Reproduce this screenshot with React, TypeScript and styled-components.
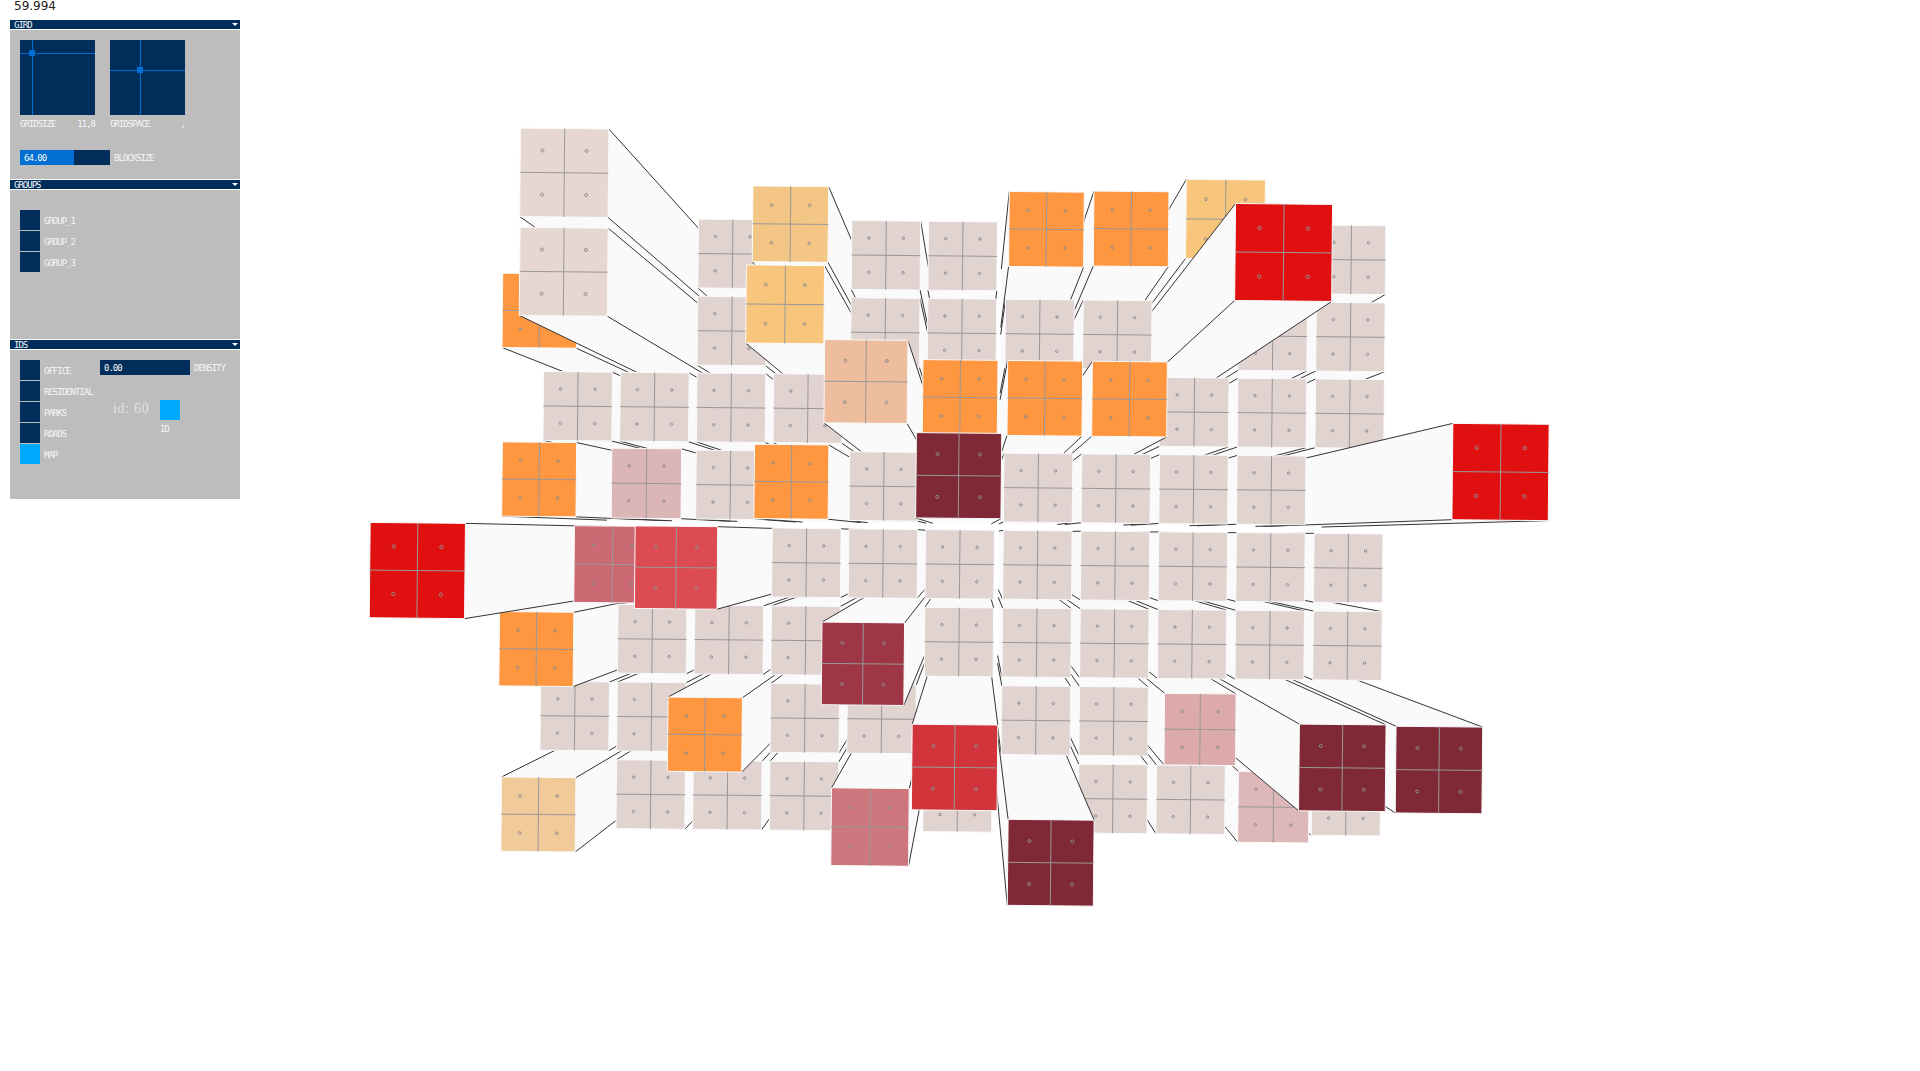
import React from 'react';
import styled, { createGlobalStyle } from 'styled-components';

const GlobalStyle = createGlobalStyle`
    html, body {
        margin: 0;
        padding: 0;
        background: #ffffff;
    }
`;

const NAVY = '#002d5a';
const BLUE = '#006ed2';
const CYAN = '#00aaff';

const Page = styled.div`
    display: flex;
    width: 1920px;
    height: 1071px;
    overflow: hidden;
    background: #ffffff;
`;
const Sidebar = styled.aside`
    flex: none;
    width: 240px;
    padding-left: 10px;
    box-sizing: border-box;
`;
const Fps = styled.div`
    height: 20px;
    padding-left: 4px;
    font: 12px/12px 'DejaVu Sans', sans-serif;
    color: #222;
`;
const Group = styled.section`
    width: 230px;
    margin-bottom: 1px;
`;
const TitleBar = styled.header`
    display: flex;
    justify-content: space-between;
    align-items: center;
    height: 9px;
    margin-bottom: 1px;
    padding: 0 2px 0 4px;
    background: ${NAVY};
`;
const Arrow = styled.span`
    width: 0;
    height: 0;
    border-left: 3px solid transparent;
    border-right: 3px solid transparent;
    border-top: 3px solid #ffffff;
`;
const Label = styled.span`
    font: 9px/10px 'DejaVu Sans Mono', monospace;
    letter-spacing: -1px;
    color: #f6f6f6;
    white-space: nowrap;
`;
const Body = styled.div`
    height: 149px;
    box-sizing: border-box;
    padding: ${(p: { $top: number }) => p.$top}px 0 0 10px;
    background: #bdbdbd;
`;
const PadRow = styled.div`
    display: flex;
    gap: 15px;
`;
const PadColumn = styled.div`
    width: 75px;
`;
const Pad = styled.div`
    width: 75px;
    height: 75px;
    display: grid;
    background: ${NAVY};
`;
const PadCaption = styled.div`
    display: flex;
    justify-content: space-between;
    margin-top: 4px;
`;
const Slider = styled.div`
    display: flex;
    align-items: center;
    gap: 4px;
    margin-top: ${(p: { $top?: number }) => p.$top ?? 0}px;
`;
const SliderTrack = styled.div`
    width: 90px;
    height: 15px;
    display: flex;
    background: ${NAVY};
`;
const SliderFill = styled.div`
    display: flex;
    align-items: center;
    height: 100%;
    padding-left: 4px;
    box-sizing: border-box;
    background: ${(p: { $on: boolean }) => (p.$on ? BLUE : 'transparent')};
`;
const ToggleList = styled.div`
    display: flex;
    flex-direction: column;
    gap: 1px;
`;
const ToggleRow = styled.div`
    display: flex;
    align-items: center;
    gap: 4px;
    height: 20px;
    & > span {
        padding-top: 2px;
    }
`;
const Toggle = styled.div`
    flex: none;
    width: 20px;
    height: 20px;
    background: ${(p: { $on?: boolean }) => (p.$on ? CYAN : NAVY)};
`;
const IdsLayout = styled.div`
    display: flex;
    gap: 0;
`;
const IdsColumn = styled.div`
    width: 80px;
`;
const IdsRight = styled.div`
    display: flex;
    flex-direction: column;
`;
const IdRow = styled.div`
    display: flex;
    gap: 13px;
    margin-top: 25px;
    padding-left: 13px;
`;
const IdValue = styled.div`
    width: 34px;
    padding-top: 2px;
    font: 14px/14px 'Liberation Serif', serif;
    letter-spacing: 0.7px;
    color: #e2e2e2;
    white-space: nowrap;
`;
const IdToggle = styled.div`
    display: flex;
    flex-direction: column;
    gap: 4px;
`;
const Scene = styled.svg`
    flex: 1;
    display: block;
    height: 1071px;
`;
const SideFace = styled.polygon`
    fill: #fafafa;
`;
const EdgeLine = styled.line`
    stroke: #333;
    stroke-width: 1;
`;
const TopFace = styled.polygon`
    stroke: #fafafa;
    stroke-width: 1;
`;
const GridLine = styled.line`
    stroke: #999;
    stroke-width: 1;
`;
const Dot = styled.circle`
    fill: none;
    stroke: #8e8e8e;
    stroke-width: 1;
`;

type Point = [number, number];

const CENTER_X = 960;
const VP_X = 973;
const VP_Y = 535;
const STEP = 77.7;
const SIZE = 68.8;
const BACK = 0.85;
const TILT = (0.55 * Math.PI) / 180;
const ROW_NUDGE = [2.5, 2, 1, 0.5, 0, 0, 0, 0];
const TO_FULL = 1.2245;

const BASE = '#e0d3d0';
const ORANGE = '#ff9640';
const AMBER = '#f8c57c';
const RED = '#e01010';
const DARK = '#7f2836';

// col, row, height scale, colour, then a small shift of the top face
const RAISED: [number, number, number, string, number, number][] = [
    [1, 0, 1.285, '#e6d7d1', -1, 0],
    [1, 1, 1.28, '#e6d7d1', -2, -1],
    [0, 1, 1.08, ORANGE, -6, -2],
    [3, 0, 1.1, '#f4c685', -2, -2],
    [3, 1, 1.135, AMBER, -1, 0],
    [4, 2, 1.21, '#eebd9d', 0, -1],
    [5, 2, 1.09, ORANGE, 0, -1],
    [6, 2, 1.09, ORANGE, 0, -1],
    [7, 2, 1.09, ORANGE, 0, -1],
    [6, 0, 1.09, ORANGE, 0, -2],
    [7, 0, 1.09, ORANGE, 0, -3],
    [8, 0, 1.15, AMBER, -3, 2],
    [8, 1, 1.41, RED, -2, -1],
    [5, 3, 1.24, DARK, 1, 0],
    [0, 3, 1.08, ORANGE, -5, 0],
    [1, 3, 1.015, '#dcb6b6', -2, 0],
    [3, 3, 1.08, ORANGE, -2, 0],
    [10, 3, 1.4, RED, 1, -1],
    [0, 4, 1.385, RED, -5, 0],
    [1, 4, 1.115, '#cb6a73', -3, 0],
    [2, 4, 1.2, '#dc4a52', -4, 0],
    [0, 5, 1.08, ORANGE, -6, 2],
    [4, 5, 1.2, '#9e3645', -1, 1],
    [2, 6, 1.08, ORANGE, -3, 2],
    [5, 6, 1.245, '#d1343b', 0, 2],
    [8, 6, 1.04, '#dcaaaa', 0, 0],
    [9, 6, 1.26, DARK, -3, -3],
    [10, 6, 1.26, DARK, -4, -2],
    [0, 7, 1.08, '#f1ca99', -3, 0],
    [4, 7, 1.13, '#ce767d', 1, -3],
    [6, 7, 1.25, DARK, 0, -1],
    [9, 7, 1.03, '#deb8b8', -3, -1],
];

const project = (x: number, y: number, scale: number): Point => {
    const rx = x * Math.cos(TILT) - y * Math.sin(TILT);
    const ry = x * Math.sin(TILT) + y * Math.cos(TILT);
    return [VP_X + (CENTER_X + rx - VP_X) * scale, VP_Y + ry * scale];
};

const toPoints = (list: Point[]) => list.map((p) => p.join(',')).join(' ');

type BlockData = {
    col: number;
    row: number;
    scale: number;
    color: string;
    cx: number;
    cy: number;
    shiftX: number;
    shiftY: number;
};

const buildBlocks = () => {
    const blocks: BlockData[] = [];
    for (let row = 0; row < 8; row++) {
        for (let col = 0; col < 11; col++) {
            const raised = RAISED.find((r) => r[0] === col && r[1] === row);
            blocks.push({
                col,
                row,
                scale: raised ? raised[2] : 1,
                color: raised ? raised[3] : BASE,
                cx: (col - 5) * STEP + (col < 5 ? 5 - col : 0),
                cy: (row - 3.5) * STEP - 9.5 + ROW_NUDGE[row],
                shiftX: raised ? raised[4] * TO_FULL : 0,
                shiftY: raised ? raised[5] * TO_FULL : 0,
            });
        }
    }
    // outer blocks first, the ones near the middle cover their sides
    return blocks.sort((a, b) => Math.hypot(b.cx, b.cy) - Math.hypot(a.cx, a.cy));
};

const Block = ({ block }: { block: BlockData }) => {
    const { cx, cy, scale, color, shiftX, shiftY } = block;
    const h = SIZE / 2;
    const top = (x: number, y: number): Point => {
        const p = project(x, y, scale);
        return [p[0] + shiftX, p[1] + shiftY];
    };
    const corners: Point[] = [
        [cx - h, cy - h],
        [cx + h, cy - h],
        [cx + h, cy + h],
        [cx - h, cy + h],
    ];
    const front = corners.map((c) => top(c[0], c[1]));
    const back = corners.map((c) => project(c[0], c[1], BACK));
    // faces in corner order: top, right, bottom, left; only those turned to the camera are drawn
    const offsetX = CENTER_X - VP_X;
    const shown = [cy - h > 0, cx + h + offsetX < 0, cy + h < 0, cx - h + offsetX > 0];
    const lineA = [top(cx, cy - h), top(cx, cy + h)];
    const lineB = [top(cx - h, cy), top(cx + h, cy)];
    const dots = [
        top(cx - h / 2, cy - h / 2),
        top(cx + h / 2, cy - h / 2),
        top(cx - h / 2, cy + h / 2),
        top(cx + h / 2, cy + h / 2),
    ];
    return (
        <g>
            {front.map((p, i) => {
                if (!shown[i]) return null;
                const j = (i + 1) % 4;
                return <SideFace key={i} points={toPoints([p, front[j], back[j], back[i]])} />;
            })}
            {front.map((p, i) =>
                shown[i] || shown[(i + 3) % 4] ? (
                    <EdgeLine key={i} x1={p[0]} y1={p[1]} x2={back[i][0]} y2={back[i][1]} />
                ) : null
            )}
            <TopFace points={toPoints(front)} fill={color} />
            <GridLine x1={lineA[0][0]} y1={lineA[0][1]} x2={lineA[1][0]} y2={lineA[1][1]} />
            <GridLine x1={lineB[0][0]} y1={lineB[0][1]} x2={lineB[1][0]} y2={lineB[1][1]} />
            {dots.map((d, i) => (
                <Dot key={i} cx={d[0]} cy={d[1]} r={1.2 * scale} />
            ))}
        </g>
    );
};

const PadGraphic = ({ x, y }: { x: number; y: number }) => (
    <svg width="75" height="75" viewBox="0 0 75 75">
        <rect x={x} y="0" width="1" height="75" fill={BLUE} />
        <rect x="0" y={y} width="75" height="1" fill={BLUE} />
        <rect x={x - 3} y={y - 3} width="6" height="6" fill={BLUE} />
    </svg>
);

const App = () => {
    const blocks = buildBlocks();
    return (
        <Page>
            <GlobalStyle />
            <Sidebar>
                <Fps>59.994</Fps>
                <Group>
                    <TitleBar>
                        <Label>GIRD</Label>
                        <Arrow />
                    </TitleBar>
                    <Body $top={10}>
                        <PadRow>
                            <PadColumn>
                                <Pad>
                                    <PadGraphic x={12} y={13} />
                                </Pad>
                                <PadCaption>
                                    <Label>GRIDSIZE</Label>
                                    <Label>11,8</Label>
                                </PadCaption>
                            </PadColumn>
                            <PadColumn>
                                <Pad>
                                    <PadGraphic x={30} y={30} />
                                </Pad>
                                <PadCaption>
                                    <Label>GRIDSPACE</Label>
                                    <Label>,</Label>
                                </PadCaption>
                            </PadColumn>
                        </PadRow>
                        <Slider $top={21}>
                            <SliderTrack>
                                <SliderFill $on style={{ width: 54 }}>
                                    <Label>64.00</Label>
                                </SliderFill>
                            </SliderTrack>
                            <Label>BLOCKSIZE</Label>
                        </Slider>
                    </Body>
                </Group>
                <Group>
                    <TitleBar>
                        <Label>GROUPS</Label>
                        <Arrow />
                    </TitleBar>
                    <Body $top={20}>
                        <ToggleList>
                            {['GROUP_1', 'GROUP_2', 'GORUP_3'].map((name) => (
                                <ToggleRow key={name}>
                                    <Toggle />
                                    <Label>{name}</Label>
                                </ToggleRow>
                            ))}
                        </ToggleList>
                    </Body>
                </Group>
                <Group>
                    <TitleBar>
                        <Label>IDS</Label>
                        <Arrow />
                    </TitleBar>
                    <Body $top={10}>
                        <IdsLayout>
                            <IdsColumn>
                                <ToggleList>
                                    {['OFFICE', 'RESIDENTIAL', 'PARKS', 'ROADS', 'MAP'].map((name) => (
                                        <ToggleRow key={name}>
                                            <Toggle $on={name === 'MAP'} />
                                            <Label>{name}</Label>
                                        </ToggleRow>
                                    ))}
                                </ToggleList>
                            </IdsColumn>
                            <IdsRight>
                                <Slider>
                                    <SliderTrack>
                                        <SliderFill $on={false}>
                                            <Label>0.00</Label>
                                        </SliderFill>
                                    </SliderTrack>
                                    <Label>DENSITY</Label>
                                </Slider>
                                <IdRow>
                                    <IdValue>id: 60</IdValue>
                                    <IdToggle>
                                        <Toggle $on />
                                        <Label>ID</Label>
                                    </IdToggle>
                                </IdRow>
                            </IdsRight>
                        </IdsLayout>
                    </Body>
                </Group>
            </Sidebar>
            <Scene viewBox="240 0 1680 1071">
                {blocks.map((b) => (
                    <Block key={`${b.col}-${b.row}`} block={b} />
                ))}
            </Scene>
        </Page>
    );
};

export default App;
